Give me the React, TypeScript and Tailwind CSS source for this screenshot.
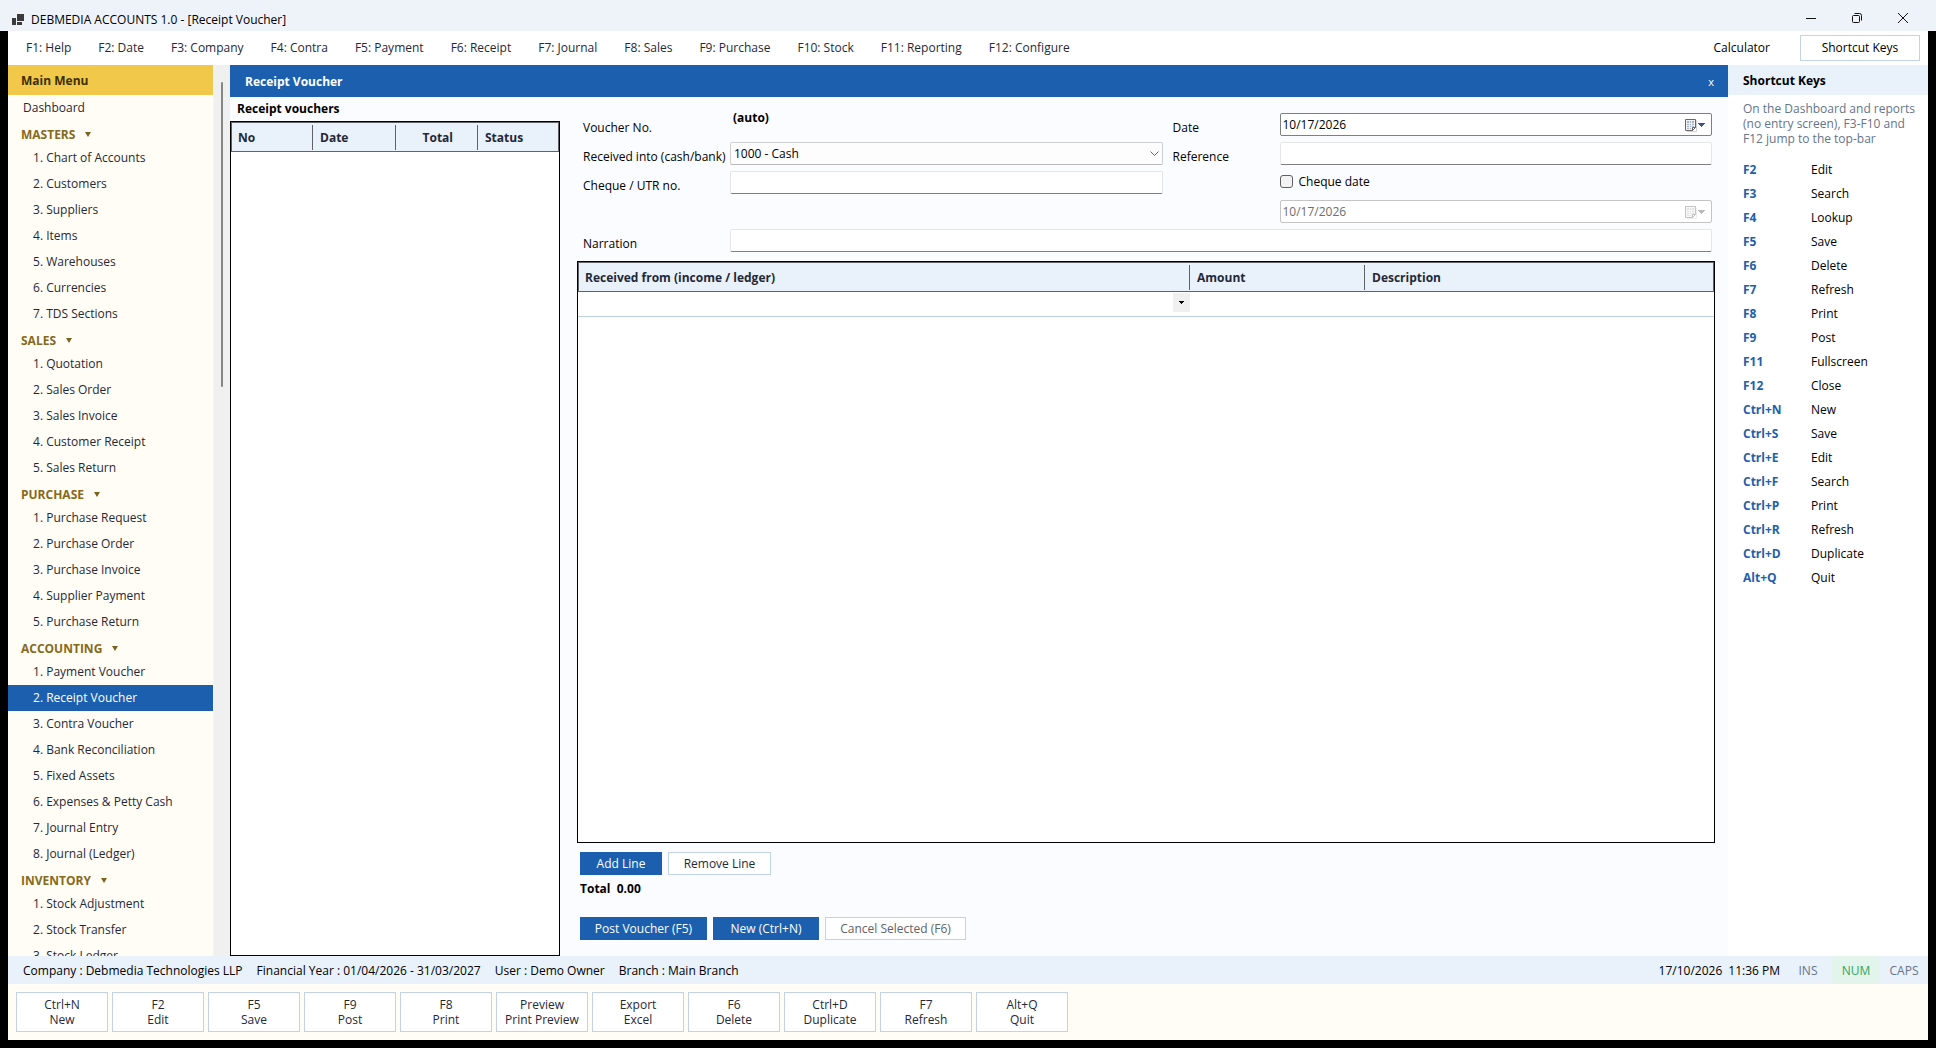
import React from "react";

const sections = [
  { name: "MASTERS", items: ["Chart of Accounts", "Customers", "Suppliers", "Items", "Warehouses", "Currencies", "TDS Sections"] },
  { name: "SALES", items: ["Quotation", "Sales Order", "Sales Invoice", "Customer Receipt", "Sales Return"] },
  { name: "PURCHASE", items: ["Purchase Request", "Purchase Order", "Purchase Invoice", "Supplier Payment", "Purchase Return"] },
  { name: "ACCOUNTING", items: ["Payment Voucher", "Receipt Voucher", "Contra Voucher", "Bank Reconciliation", "Fixed Assets", "Expenses & Petty Cash", "Journal Entry", "Journal (Ledger)"] },
  { name: "INVENTORY", items: ["Stock Adjustment", "Stock Transfer", "Stock Ledger"] },
];

const topMenu = ["F1: Help", "F2: Date", "F3: Company", "F4: Contra", "F5: Payment", "F6: Receipt", "F7: Journal", "F8: Sales", "F9: Purchase", "F10: Stock", "F11: Reporting", "F12: Configure"];

const shortcuts = [
  ["F2", "Edit"], ["F3", "Search"], ["F4", "Lookup"], ["F5", "Save"], ["F6", "Delete"], ["F7", "Refresh"],
  ["F8", "Print"], ["F9", "Post"], ["F11", "Fullscreen"], ["F12", "Close"], ["Ctrl+N", "New"], ["Ctrl+S", "Save"],
  ["Ctrl+E", "Edit"], ["Ctrl+F", "Search"], ["Ctrl+P", "Print"], ["Ctrl+R", "Refresh"], ["Ctrl+D", "Duplicate"], ["Alt+Q", "Quit"],
];

const actions = [
  ["Ctrl+N", "New"], ["F2", "Edit"], ["F5", "Save"], ["F9", "Post"], ["F8", "Print"], ["Preview", "Print Preview"],
  ["Export", "Excel"], ["F6", "Delete"], ["Ctrl+D", "Duplicate"], ["F7", "Refresh"], ["Alt+Q", "Quit"],
];

function TitleBar() {
  return (
    <header className="flex h-[31px] items-center bg-[#eef3fa] pl-3 text-black">
      <svg width="12" height="12" viewBox="0 0 12 12" className="mt-2 fill-[#3b3b3b]" aria-hidden="true">
        <path d="M5 0h7v7H5zM0 4h4v7H0zM5 8h5v3H5z" />
      </svg>
      <h1 className="mt-2 ml-[7px]">DEBMEDIA ACCOUNTS 1.0 - [Receipt Voucher]</h1>
      <div className="mt-1 ml-auto flex pr-[10px]">
        <button aria-label="Minimize" className="flex h-6 w-[46px] items-center justify-center">
          <svg width="12" height="12" viewBox="0 0 12 12" fill="none" stroke="#111"><path d="M1 6.5h10" /></svg>
        </button>
        <button aria-label="Restore" className="flex h-6 w-[46px] items-center justify-center">
          <svg width="12" height="12" viewBox="0 0 12 12" fill="none" stroke="#111">
            <rect x="1.500" y="3.500" width="7" height="7" rx="1" />
            <path d="M3.500 1.500h5a2 2 0 0 1 2 2v5" />
          </svg>
        </button>
        <button aria-label="Close" className="flex h-6 w-[46px] items-center justify-center">
          <svg width="12" height="12" viewBox="0 0 12 12" fill="none" stroke="#111"><path d="M1 1l10 10M11 1L1 11" /></svg>
        </button>
      </div>
    </header>
  );
}

function MenuBar() {
  return (
    <nav className="flex h-[34px] shrink-0 items-center bg-white pr-2 pl-[18px]" aria-label="Function keys">
      <div className="flex gap-[27px]">
        {topMenu.map((m) => <button key={m} className="whitespace-nowrap">{m}</button>)}
      </div>
      <button className="ml-auto text-black">Calculator</button>
      <button className="ml-[30px] h-[26px] w-[120px] border border-[#c3d3e6] text-black">Shortcut Keys</button>
    </nav>
  );
}

function Sidebar() {
  return (
    <aside className="flex w-[222px] shrink-0 overflow-hidden bg-[#fffdf5]">
      <div className="min-w-0 flex-1 border-r border-[#f7f6f2]">
        <h2 className="flex h-[30px] items-center bg-[#f2c84b] pt-[2px] pl-[13px] font-bold text-[#3d3000]">Main Menu</h2>
        <a href="#dashboard" className="flex h-[26px] items-center pl-[15px]">Dashboard</a>
        {sections.map((s) => (
          <section key={s.name}>
            <button className="flex h-6 items-center gap-[10px] pt-[3px] pl-[13px] font-bold text-[#86691c]">
              {s.name}
              <svg width="6" height="5" viewBox="0 0 6 5" className="fill-[#7c621f]" aria-hidden="true"><path d="M0 0h6L3 5z" /></svg>
            </button>
            <ol>
              {s.items.map((item, i) => (
                <li key={item}>
                  <a
                    href="#"
                    className={item === "Receipt Voucher" ? "flex h-[26px] items-center bg-[#1c5fae] pl-[25px] text-white" : "flex h-[26px] items-center pl-[25px]"}
                  >
                    {i + 1}. {item}
                  </a>
                </li>
              ))}
            </ol>
          </section>
        ))}
      </div>
      <div className="w-4 bg-[#f0f0f0] pt-[17px]" aria-hidden="true">
        <div className="mx-auto h-[305px] w-[2px] rounded bg-[#868686]" />
      </div>
    </aside>
  );
}

function HeadCell({ children, last, right, className }: { children: React.ReactNode; last?: boolean; right?: boolean; className?: string }) {
  return (
    <th className={`h-[30px] p-0 ${className ?? ""}`}>
      <div className={`flex h-[25px] items-center pt-[2px] ${last ? "" : "border-r border-[#5f6266]"} ${right ? "justify-end pr-6" : "pl-[7px]"}`}>{children}</div>
    </th>
  );
}

function VoucherList() {
  return (
    <section className="flex w-[330px] shrink-0 flex-col">
      <h3 className="flex h-6 items-center pl-[7px] font-bold text-black">Receipt vouchers</h3>
      <div className="flex-1 border border-black bg-white">
        <table className="w-full table-fixed border-collapse bg-[#e9f1fb] text-left outline outline-1 -outline-offset-1 outline-[#5f6266]">
          <thead>
            <tr>
              <HeadCell className="w-[82px]">No</HeadCell>
              <HeadCell className="w-[83px]">Date</HeadCell>
              <HeadCell className="w-[82px]" right>Total</HeadCell>
              <HeadCell last>Status</HeadCell>
            </tr>
          </thead>
        </table>
      </div>
    </section>
  );
}

function DateBox({ id, label, disabled }: { id: string; label: string; disabled?: boolean }) {
  return (
    <div className={`flex h-[23px] items-center rounded-[2px] border bg-white pr-[6px] ${disabled ? "border-[#c4c4c4]" : "border-[#7f7f7f]"}`}>
      <input id={id} aria-label={label} disabled={disabled} defaultValue="10/17/2026" className={`min-w-0 flex-1 pl-[2px] outline-none ${disabled ? "text-[#6d6d6d]" : "text-black"}`} />
      <button disabled={disabled} aria-label="Open calendar" className={disabled ? "opacity-40 grayscale" : ""}>
        <svg width="20" height="14" viewBox="0 0 20 14" fill="none">
          <path d="M2 13.500h9.500v-11" stroke="#d0d0d0" />
          <path d="M.5 1.500h10v8l-3 3h-7z" fill="#f0f2f6" stroke="#6f6664" />
          <path d="M2 3h7v6H7v2H2z" fill="#aab7c6" />
          <path d="M2 5.500h7M2 7.500h7M2 9.500h5M4.500 3v8M6.500 3v8" stroke="#f4f7fa" strokeWidth=".8" />
          <path d="M7.500 12.500v-3h3z" fill="#fff" stroke="#6f6664" />
          <path d="M13 5h7v1h-1v1h-1v1h-1v1h-1V8h-1V7h-1V6h-1z" fill="#3b5488" />
        </svg>
      </button>
    </div>
  );
}

const field = "h-[23px] w-full rounded-[2px] border border-[#e6e6e6] border-b-[#7f7f7f] bg-white px-1 text-black outline-none";
const leftLabel = "flex h-[29px] items-center pt-[7px] pl-[3px] whitespace-nowrap";
const rightLabel = "flex h-[29px] items-center pt-[7px] pl-[10px]";

function VoucherForm() {
  return (
    <form className="grid grid-cols-[150px_1fr_117px_1fr] px-[3px] pt-[13px] text-black" onSubmit={(e) => e.preventDefault()}>
      <span className={leftLabel}>Voucher No.</span>
      <output className="h-[29px] pl-[3px] font-bold">(auto)</output>
      <label htmlFor="date" className={rightLabel}>Date</label>
      <div className="pt-[3px]"><DateBox id="date" label="Date" /></div>

      <label htmlFor="account" className={leftLabel}>Received into (cash/bank)</label>
      <div className="relative pt-[3px]">
        <select id="account" className="h-[23px] w-full appearance-none rounded-[2px] border border-[#cfcfcf] border-b-[#b8b8b8] bg-[#fdfdfd] pl-[3px] text-black outline-none">
          <option>1000 - Cash</option>
        </select>
        <svg width="9" height="6" viewBox="0 0 9 6" fill="none" stroke="#666" className="pointer-events-none absolute top-3 right-1"><path d="M.5.5l4 4 4-4" /></svg>
      </div>
      <label htmlFor="reference" className={rightLabel}>Reference</label>
      <div className="pt-[3px]"><input id="reference" className={field} /></div>

      <label htmlFor="cheque" className={leftLabel}>Cheque / UTR no.</label>
      <div className="pt-[3px]"><input id="cheque" className={field} /></div>
      <label className="col-start-4 flex h-[29px] items-center gap-[6px] pb-[2px]">
        <input type="checkbox" className="h-[13px] w-[13px] appearance-none rounded-[3px] border border-[#5f5f5f] bg-[#f3f3f3]" />
        Cheque date
      </label>

      <div className="col-start-4 h-[29px] pt-[3px]"><DateBox id="cheque-date" label="Cheque date" disabled /></div>

      <label htmlFor="narration" className={leftLabel}>Narration</label>
      <div className="col-span-3 pt-[3px]"><input id="narration" className={field} /></div>
    </form>
  );
}

function LineGrid() {
  return (
    <div className="mt-[6px] flex-1 border border-black bg-white">
      <table className="w-full table-fixed border-collapse text-left">
        <thead className="bg-[#e9f1fb] outline outline-1 -outline-offset-1 outline-[#5f6266]">
          <tr>
            <HeadCell className="w-[612px]">Received from (income / ledger)</HeadCell>
            <HeadCell className="w-[175px]">Amount</HeadCell>
            <HeadCell last>Description</HeadCell>
          </tr>
        </thead>
        <tbody>
          <tr className="border-b border-[#bccfe3]">
            <td className="h-[24px] p-0">
              <button aria-label="Choose ledger" className="mb-[2px] ml-auto flex h-[19px] w-[17px] items-center justify-center bg-[#f0f0f0]">
                <svg width="5" height="3" viewBox="0 0 5 3"><path d="M0 0h5v1H4v1H3v1H2V2H1V1H0z" /></svg>
              </button>
            </td>
            <td />
            <td />
          </tr>
        </tbody>
      </table>
    </div>
  );
}

const primary = "h-[23px] bg-[#1c5fae] text-white";
const secondary = "h-[23px] border border-[#c3d3e6] bg-white pt-px";

function Workspace() {
  return (
    <main className="flex min-w-0 flex-1 flex-col bg-[#fbfcff]">
      <div className="flex h-8 shrink-0 items-center justify-between bg-[#1c5fae] pt-px pr-[14px] pl-[15px] text-white">
        <h2 className="font-bold">Receipt Voucher</h2>
        <button aria-label="Close voucher" className="text-[11px]">x</button>
      </div>
      <div className="flex min-h-0 flex-1">
        <VoucherList />
        <section className="flex min-w-0 flex-1 flex-col pr-[13px] pl-[17px]">
          <VoucherForm />
          <LineGrid />
          <div className="h-[113px] px-[3px] pt-[9px]">
            <div className="flex gap-[6px]">
              <button className={`${primary} w-[82px]`}>Add Line</button>
              <button className={`${secondary} w-[103px]`}>Remove Line</button>
            </div>
            <p className="mt-[6px] h-4 font-bold text-black">Total&nbsp; 0.00</p>
            <div className="mt-5 flex gap-[6px]">
              <button className={`${primary} w-[127px]`}>Post Voucher (F5)</button>
              <button className={`${primary} w-[106px]`}>New (Ctrl+N)</button>
              <button className={`${secondary} w-[141px] text-[#5f6266]`}>Cancel Selected (F6)</button>
            </div>
          </div>
        </section>
      </div>
    </main>
  );
}

function ShortcutPanel() {
  return (
    <aside className="w-[200px] shrink-0 bg-white">
      <h2 className="flex h-[30px] items-center bg-[#e9f1fb] pt-[2px] pl-[15px] font-bold text-black">Shortcut Keys</h2>
      <p className="mt-[6px] mr-2 ml-[15px] leading-[15px] text-[#64748b]">
        On the Dashboard and reports<br />(no entry screen), F3-F10 and<br />F12 jump to the top-bar
      </p>
      <dl className="mt-3">
        {shortcuts.map(([k, v]) => (
          <div key={k} className="flex h-6 items-center pl-[15px]">
            <dt className="w-[68px] font-bold text-[#1c5fae]">{k}</dt>
            <dd className="text-black">{v}</dd>
          </div>
        ))}
      </dl>
    </aside>
  );
}

const lockState = "flex h-full w-12 items-center justify-center pt-[2px]";

function StatusBar() {
  return (
    <div className="flex h-7 shrink-0 items-center bg-[#e9f1fb] pl-[15px] text-black">
      <div className="flex gap-[14px] pt-[2px]">
        <span>Company : Debmedia Technologies LLP</span>
        <span>Financial Year : 01/04/2026 - 31/03/2027</span>
        <span>User : Demo Owner</span>
        <span>Branch : Main Branch</span>
      </div>
      <div className="ml-auto flex gap-[6px] pt-[2px] pr-1">
        <span>17/10/2026</span>
        <span>11:36 PM</span>
      </div>
      <span className={`${lockState} text-[#64748b]`}>INS</span>
      <span className={`${lockState} bg-[#e3f4ec] text-[#2fa663]`}>NUM</span>
      <span className={`${lockState} text-[#64748b]`}>CAPS</span>
    </div>
  );
}

export default function App() {
  return (
    <div className="flex h-screen flex-col bg-black font-['Open_Sans','Noto_Sans',sans-serif] text-[12px] leading-4 text-[#1f2937]">
      <TitleBar />
      <div className="mx-2 mb-2 flex min-h-0 flex-1 flex-col">
        <MenuBar />
        <div className="flex min-h-0 flex-1">
          <Sidebar />
          <Workspace />
          <ShortcutPanel />
        </div>
        <StatusBar />
        <footer className="flex h-14 shrink-0 gap-1 bg-[#fffdf5] p-2">
          {actions.map(([k, v]) => (
            <button key={k} className="h-10 w-[92px] border border-[#c3d3e6] bg-white leading-[15px]">
              {k}<br />{v}
            </button>
          ))}
        </footer>
      </div>
    </div>
  );
}
